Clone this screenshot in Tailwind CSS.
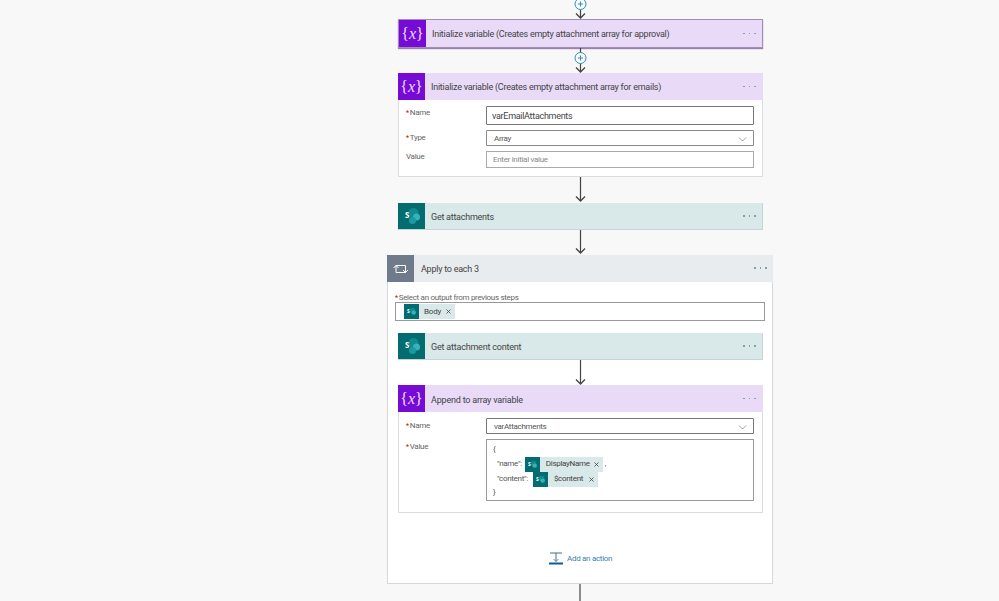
<!DOCTYPE html>
<html><head><meta charset="utf-8"><script src="https://cdn.jsdelivr.net/npm/@tailwindcss/browser@4"></script></head>
<body class="m-0 bg-[#f8f8f8] overflow-hidden font-['Roboto','Open_Sans',sans-serif] text-[#333]">
<div class="w-[999px] h-[601px] overflow-hidden">
<div class="ml-[387px] w-[386px] flex flex-col">

<!-- top connector -->
<div class="h-[19px] flex justify-center">
<svg width="20" height="19" viewBox="0 0 20 19" fill="none"><path d="M10.5 9V18" stroke="#444" stroke-width="1.2"/><path d="M6 13.5L10.5 18L15 13.5" stroke="#444" stroke-width="1.3"/><circle cx="10.5" cy="4" r="5.5" fill="#f3f9fc" stroke="#3f8fb0" stroke-width="1"/><path d="M10.5 1.5V6.5M8 4H13" stroke="#3f8fb0" stroke-width="1"/></svg>
</div>

<!-- card 1 -->
<div class="mx-[11px] w-[365px] h-[29px] flex items-stretch bg-[#e9daf7] border border-[#a58bb8] shadow-[0_1px_1px_#9a7fb0]">
  <div class="w-[27px] bg-[#770bd6] flex items-center justify-center text-[#eedcff] text-[16px] font-['Liberation_Serif',serif] leading-none">{<span class="italic">x</span>}</div>
  <div class="flex-1 pl-[6px] pt-[3px] text-[9px] tracking-[-0.25px] flex items-center whitespace-nowrap text-[#444]">Initialize variable (Creates empty attachment array for approval)</div>
  <div class="w-[19px] flex items-center gap-[4px]"><i class="w-[1.5px] h-[1.5px] bg-[#7f9fb5]"></i><i class="w-[1.5px] h-[1.5px] bg-[#7f9fb5]"></i><i class="w-[1.5px] h-[1.5px] bg-[#7f9fb5]"></i></div>
</div>

<!-- connector with plus -->
<div class="h-[25px] flex justify-center">
<svg width="20" height="25" viewBox="0 0 20 25" fill="none"><path d="M10.5 0V24" stroke="#444" stroke-width="1.2"/><path d="M6 19.5L10.5 24L15 19.5" stroke="#444" stroke-width="1.3"/><circle cx="10.5" cy="10" r="5.5" fill="#f3f9fc" stroke="#3f8fb0" stroke-width="1"/><path d="M10.5 7.5V12.5M8 10H13" stroke="#3f8fb0" stroke-width="1"/></svg>
</div>

<!-- card 2 -->
<div class="mx-[11px] w-[365px] h-[104px] bg-white border border-[#dcdcdc] flex flex-col">
  <div class="h-[27px] flex items-stretch bg-[#e9daf7] -mx-px -mt-px">
    <div class="w-[27px] bg-[#770bd6] flex items-center justify-center text-[#eedcff] text-[16px] font-['Liberation_Serif',serif] leading-none">{<span class="italic">x</span>}</div>
    <div class="flex-1 pl-[6px] pt-[3px] text-[9px] tracking-[-0.25px] flex items-center whitespace-nowrap text-[#444]">Initialize variable (Creates empty attachment array for emails)</div>
    <div class="w-[20px] flex items-center gap-[4px]"><i class="w-[1.5px] h-[1.5px] bg-[#7f9fb5]"></i><i class="w-[1.5px] h-[1.5px] bg-[#7f9fb5]"></i><i class="w-[1.5px] h-[1.5px] bg-[#7f9fb5]"></i></div>
  </div>
  <div class="mt-[6px] grid grid-cols-[80px_268px] pl-[7px] gap-y-[5px] text-[8px] tracking-[-0.3px] text-[#666]">
    <div class="h-[19px] leading-[14px]"><span class="text-[#c00] text-[7px] mr-[1px]">*</span>Name</div>
    <div class="h-[19px] border border-[#777] rounded-[1px] flex items-center pl-[5px] pt-[2px] text-[9px] text-[#444]">varEmailAttachments</div>
    <div class="h-[16px] leading-[15px]"><span class="text-[#c00] text-[7px] mr-[1px]">*</span>Type</div>
    <div class="h-[16px] border border-[#888] rounded-[1px] flex items-center justify-between pl-[7px] pr-[6px] pt-[2px] text-[#555]">Array<svg width="9" height="5" viewBox="0 0 9 5" fill="none"><path d="M1 .5L4.5 4L8 .5" stroke="#888" stroke-width=".8"/></svg></div>
    <div class="h-[17px] leading-[11px]">Value</div>
    <div class="h-[17px] border border-[#aaa] flex items-center pl-[6px] text-[#888]">Enter initial value</div>
  </div>
</div>

<!-- connector -->
<div class="h-[26px] flex justify-center">
<svg width="20" height="26" viewBox="0 0 20 26" fill="none"><path d="M10.5 0V24" stroke="#444" stroke-width="1.2"/><path d="M6 19.5L10.5 24L15 19.5" stroke="#444" stroke-width="1.3"/></svg>
</div>

<!-- get attachments -->
<div class="mx-[11px] w-[365px] h-[27px] flex items-stretch bg-[#d9e8e8] border-b border-r border-[#c5d4d4]">
  <div class="w-[27px] bg-[#036c70] flex items-center justify-center">
    <svg width="20" height="20" viewBox="0 0 20 20"><circle cx="11.5" cy="7" r="5" fill="#0f8a8e"/><circle cx="14.5" cy="11" r="3.5" fill="#36b3b8"/><circle cx="10.5" cy="14.5" r="3.5" fill="#1a9ba1"/><text x="3" y="12" font-size="8" font-weight="700" fill="#fff" font-family="Open Sans, sans-serif">S</text></svg>
  </div>
  <div class="flex-1 pl-[6px] pt-[4px] text-[9px] tracking-[-0.25px] flex items-center text-[#444]">Get attachments</div>
  <div class="w-[19px] flex items-center gap-[4px]"><i class="w-[1.5px] h-[1.5px] bg-[#7f9fb5]"></i><i class="w-[1.5px] h-[1.5px] bg-[#7f9fb5]"></i><i class="w-[1.5px] h-[1.5px] bg-[#7f9fb5]"></i></div>
</div>

<!-- connector -->
<div class="h-[25px] flex justify-center">
<svg width="20" height="25" viewBox="0 0 20 25" fill="none"><path d="M10.5 0V23" stroke="#444" stroke-width="1.2"/><path d="M6 18.5L10.5 23L15 18.5" stroke="#444" stroke-width="1.3"/></svg>
</div>

<!-- apply to each -->
<div class="h-[329px] bg-white border border-[#d8d8d8] flex flex-col">
  <div class="h-[27px] flex items-stretch bg-[#e9ecef] -mx-px -mt-px">
    <div class="w-[27px] bg-[#6f7b8b] flex items-center justify-center">
      <svg width="16" height="12" viewBox="0 0 16 12" fill="none" stroke="#fff" stroke-width="1"><path d="M3 9.5V2.5H12.5V7.5"/><path d="M.5 5L3 2.5L5.5 5"/><path d="M3 9.5H12.5V7"/><path d="M10 7L12.5 9.5L15 7"/></svg>
    </div>
    <div class="flex-1 pl-[7px] pt-[3px] text-[9px] tracking-[-0.25px] flex items-center text-[#444]">Apply to each 3</div>
    <div class="w-[19px] pb-[1px] flex items-center gap-[4px]"><i class="w-[1.5px] h-[1.5px] bg-[#7f9fb5]"></i><i class="w-[1.5px] h-[1.5px] bg-[#7f9fb5]"></i><i class="w-[1.5px] h-[1.5px] bg-[#7f9fb5]"></i></div>
  </div>
  <div class="mt-[11px] pl-[7px] h-[9px] leading-[9px] text-[8px] tracking-[-0.3px] text-[#666] whitespace-nowrap"><span class="text-[#c00] text-[7px] mr-[1px]">*</span>Select an output from previous steps</div>
  <div class="ml-[7px] w-[370px] h-[19px] border border-[#999] flex items-center pl-[8px]">
    <span class="w-[15px] h-[15px] bg-[#036c70] flex items-center justify-center"><svg width="11" height="11" viewBox="0 0 20 20"><circle cx="12" cy="8" r="5" fill="#0f8a8e"/><circle cx="14" cy="12" r="4" fill="#36b3b8"/><text x="2" y="13" font-size="9" font-weight="700" fill="#fff" font-family="Open Sans, sans-serif">S</text></svg></span>
    <span class="h-[15px] bg-[#d9e8e8] flex items-center pl-[5px] pr-[4px] gap-[5px] text-[8px] tracking-[-0.2px] text-[#444]">Body<svg width="5" height="5" viewBox="0 0 5 5" stroke="#444" stroke-width=".8"><path d="M.5.5L4.5 4.5M4.5.5L.5 4.5"/></svg></span>
  </div>

  <div class="ml-[10px] mt-[12px] w-[365px] h-[27px] flex items-stretch bg-[#d9e8e8] border-b border-r border-[#c5d4d4]">
    <div class="w-[27px] bg-[#036c70] flex items-center justify-center">
      <svg width="20" height="20" viewBox="0 0 20 20"><circle cx="11.5" cy="7" r="5" fill="#0f8a8e"/><circle cx="14.5" cy="11" r="3.5" fill="#36b3b8"/><circle cx="10.5" cy="14.5" r="3.5" fill="#1a9ba1"/><text x="3" y="12" font-size="8" font-weight="700" fill="#fff" font-family="Open Sans, sans-serif">S</text></svg>
    </div>
    <div class="flex-1 pl-[6px] pt-[4px] text-[9px] tracking-[-0.2px] flex items-center text-[#444]">Get attachment content</div>
    <div class="w-[19px] flex items-center gap-[4px]"><i class="w-[1.5px] h-[1.5px] bg-[#7f9fb5]"></i><i class="w-[1.5px] h-[1.5px] bg-[#7f9fb5]"></i><i class="w-[1.5px] h-[1.5px] bg-[#7f9fb5]"></i></div>
  </div>

  <div class="h-[25px] flex justify-center">
  <svg width="20" height="25" viewBox="0 0 20 25" fill="none"><path d="M10.5 0V24" stroke="#444" stroke-width="1.2"/><path d="M6 19.5L10.5 24L15 19.5" stroke="#444" stroke-width="1.3"/></svg>
  </div>

  <div class="ml-[10px] w-[365px] h-[128px] bg-white border border-[#dcdcdc] flex flex-col">
    <div class="h-[27px] flex items-stretch bg-[#e9daf7] -mx-px -mt-px">
      <div class="w-[27px] bg-[#770bd6] flex items-center justify-center text-[#eedcff] text-[16px] font-['Liberation_Serif',serif] leading-none">{<span class="italic">x</span>}</div>
      <div class="flex-1 pl-[6px] pt-[5px] text-[9px] tracking-[-0.2px] flex items-center text-[#444]">Append to array variable</div>
      <div class="w-[20px] flex items-center gap-[4px]"><i class="w-[1.5px] h-[1.5px] bg-[#7f9fb5]"></i><i class="w-[1.5px] h-[1.5px] bg-[#7f9fb5]"></i><i class="w-[1.5px] h-[1.5px] bg-[#7f9fb5]"></i></div>
    </div>
    <div class="mt-[6px] grid grid-cols-[80px_268px] pl-[7px] gap-y-[5px] text-[8px] tracking-[-0.3px] text-[#666]">
      <div class="h-[16px] leading-[15px]"><span class="text-[#c00] text-[7px] mr-[1px]">*</span>Name</div>
      <div class="h-[16px] border border-[#777] rounded-[1px] flex items-center justify-between pl-[7px] pr-[6px] pt-[2px] text-[#555]">varAttachments<svg width="9" height="5" viewBox="0 0 9 5" fill="none"><path d="M1 .5L4.5 4L8 .5" stroke="#888" stroke-width=".8"/></svg></div>
      <div class="h-[62px] leading-[15px]"><span class="text-[#c00] text-[7px] mr-[1px]">*</span>Value</div>
      <div class="h-[62px] border border-[#999] pl-[6px] pt-[3px] text-[#555] flex flex-col">
        <div class="h-[13px] leading-[13px]">{</div>
        <div class="h-[16px] flex items-center pl-[4px] whitespace-nowrap">"name":
          <span class="ml-[3px] w-[15px] h-[15px] bg-[#036c70] flex items-center justify-center"><svg width="11" height="11" viewBox="0 0 20 20"><circle cx="12" cy="8" r="5" fill="#0f8a8e"/><circle cx="14" cy="12" r="4" fill="#36b3b8"/><text x="2" y="13" font-size="9" font-weight="700" fill="#fff" font-family="Open Sans, sans-serif">S</text></svg></span>
          <span class="h-[15px] bg-[#d9e8e8] flex items-center pl-[6px] pr-[4px] gap-[4px] text-[#444]">DisplayName<svg width="5" height="5" viewBox="0 0 5 5" stroke="#444" stroke-width=".8"><path d="M.5.5L4.5 4.5M4.5.5L.5 4.5"/></svg></span><span class="ml-[2px]">,</span>
        </div>
        <div class="h-[16px] -mt-[1px] flex items-center pl-[4px] whitespace-nowrap">"content":
          <span class="ml-[5px] w-[15px] h-[15px] bg-[#036c70] flex items-center justify-center"><svg width="11" height="11" viewBox="0 0 20 20"><circle cx="12" cy="8" r="5" fill="#0f8a8e"/><circle cx="14" cy="12" r="4" fill="#36b3b8"/><text x="2" y="13" font-size="9" font-weight="700" fill="#fff" font-family="Open Sans, sans-serif">S</text></svg></span>
          <span class="h-[15px] bg-[#d9e8e8] flex items-center pl-[6px] pr-[4px] gap-[6px] text-[#444]">$content<svg width="5" height="5" viewBox="0 0 5 5" stroke="#444" stroke-width=".8"><path d="M.5.5L4.5 4.5M4.5.5L.5 4.5"/></svg></span>
        </div>
        <div class="h-[12px] leading-[12px]">}</div>
      </div>
    </div>
  </div>

  <div class="mt-[39px] ml-[161px] flex items-center gap-[4px] text-[8px] tracking-[-0.3px] text-[#3a7fae]">
    <svg width="14" height="13" viewBox="0 0 14 13" fill="none"><path d="M1 1H13M7 1V9.5" stroke="#3a6f96" stroke-width="1"/><path d="M4.5 7L7 9.5L9.5 7" stroke="#3a6f96" stroke-width=".8"/><path d="M0 11.5H14" stroke="#0f5a9c" stroke-width="2"/></svg>
    Add an action
  </div>
</div>

<div class="h-[17px] flex justify-center">
<svg width="20" height="17" viewBox="0 0 20 17" fill="none"><path d="M10 0V17" stroke="#444" stroke-width="1.2"/></svg>
</div>

</div>
</div>
</body></html>
